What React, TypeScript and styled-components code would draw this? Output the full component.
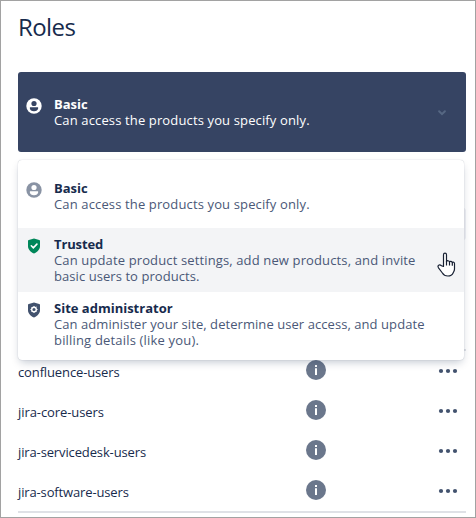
import React from 'react';
import styled, { createGlobalStyle } from 'styled-components';

const GlobalStyle = createGlobalStyle`
  * { box-sizing: border-box; }
  body { margin: 0; background: #fff; }
`;

const Page = styled.main`
  position: relative;
  width: 476px;
  height: 518px;
  padding: 0 9px 0 17px;
  border: 1px solid #a2a2a2;
  background: #fff;
  color: #172b4d;
  font: 13px/16px 'Open Sans', 'Noto Sans', sans-serif;
  overflow: hidden;
`;

const Heading = styled.h1`
  height: 71px;
  margin: 0;
  padding-top: 12px;
  font-size: 24px;
  font-weight: 400;
  line-height: 28px;
  letter-spacing: -0.6px;
`;

const Trigger = styled.div`
  display: flex;
  align-items: flex-start;
  height: 80px;
  padding: 24px 16px 0 8px;
  border-radius: 3px;
  background: #364463;
  color: #fff;
`;

const Field = styled.div`
  height: 32px;
  margin-top: 56px;
  border-radius: 3px;
  background: #f0f1f5;
`;

const Groups = styled.div`
  height: 164px;
  margin-top: 109px;
  border-top: 2px solid #dfe1e6;
  border-bottom: 2px solid #dfe1e6;
`;

const GroupRow = styled.div`
  display: grid;
  grid-template-columns: 288px 132px 1fr;
  align-items: center;
  height: 40px;
`;

const GroupName = styled.span<{ $spacing: number }>`
  padding-top: 1px;
  letter-spacing: ${p => p.$spacing}px;
  white-space: nowrap;
`;

const Menu = styled.div`
  position: absolute;
  top: 159px;
  left: 17px;
  width: 446px;
  height: 200px;
  padding: 4px 0;
  border-radius: 4px;
  background: #fff;
  box-shadow: 0 0 1px rgba(9, 30, 66, 0.31), 0 4px 8px -2px rgba(9, 30, 66, 0.25);
`;

const Option = styled.div<{ $active?: boolean; $tall?: boolean }>`
  display: flex;
  align-items: flex-start;
  height: 64px;
  padding: ${p => (p.$tall ? 16 : 8)}px 8px 0;
  background: ${p => (p.$active ? '#f3f4f6' : 'transparent')};
`;

const IconSlot = styled.span`
  flex: none;
  width: 28px;
  height: 20px;
  padding-top: 2px;
  svg { display: block; }
`;

const Copy = styled.div`
  flex: 1;
`;

const Title = styled.div<{ $spacing?: number }>`
  font-weight: 700;
  letter-spacing: ${p => p.$spacing ?? 0}px;
`;

const Line = styled.div<{ $spacing: number; $muted?: boolean }>`
  color: ${p => (p.$muted ? '#4a5877' : 'inherit')};
  letter-spacing: ${p => p.$spacing}px;
  white-space: nowrap;
`;

const ChevronIcon = styled.svg`
  margin-top: 12px;
`;

const InfoIcon = styled.svg`
  margin-bottom: 2px;
`;

const Pointer = styled.svg`
  position: absolute;
  top: 92px;
  left: 418px;
`;

const Person = ({ color, hole }: { color: string; hole: string }) => (
  <svg width="16" height="16" viewBox="0 0 16 16">
    <circle cx="8" cy="8" r="7.7" fill={color} />
    <circle cx="8" cy="5.5" r="2.6" fill={hole} />
    <path d="M3.9 9.3h8.2v1.3c0 1.7-1.8 2.6-4.1 2.6s-4.1-.9-4.1-2.6z" fill={hole} />
  </svg>
);

const Shield = ({ color, children }: { color: string; children: React.ReactNode }) => (
  <svg width="16" height="16" viewBox="0 0 16 16">
    <path d="M8 .4 13.2 2Q14 2.2 14 3v5.2c0 3.2-2.7 5.7-6 7.4-3.3-1.7-6-4.2-6-7.4V3q0-.8.8-1z" fill={color} />
    {children}
  </svg>
);

const Info = () => (
  <InfoIcon width="20" height="20" viewBox="0 0 20 20">
    <circle cx="10" cy="10" r="10" fill="#6b778c" />
    <path d="M9 5h2v2H9zM9 8.3h2V15H9z" fill="#fff" />
  </InfoIcon>
);

const More = () => (
  <svg width="20" height="6" viewBox="0 0 20 6">
    <circle cx="3" cy="3" r="2.1" fill="#42526e" />
    <circle cx="10" cy="3" r="2.1" fill="#42526e" />
    <circle cx="17" cy="3" r="2.1" fill="#42526e" />
  </svg>
);

const groups = [
  { name: 'confluence-users', spacing: -0.13 },
  { name: 'jira-core-users', spacing: -0.08 },
  { name: 'jira-servicedesk-users', spacing: -0.13 },
  { name: 'jira-software-users', spacing: -0.14 },
];

export default function App() {
  return (
    <>
      <GlobalStyle />
      <Page>
        <Heading>Roles</Heading>
        <Trigger>
          <IconSlot><Person color="#fff" hole="#364463" /></IconSlot>
          <Copy>
            <Title>Basic</Title>
            <Line $spacing={0.136}>Can access the products you specify only.</Line>
          </Copy>
          <ChevronIcon width="16" height="10" viewBox="0 0 16 10">
            <path d="m5.1 3.2 2.9 2.9 2.9-2.9" fill="none" stroke="#566783" strokeWidth="2" strokeLinecap="round" />
          </ChevronIcon>
        </Trigger>
        <Field />
        <Groups>
          {groups.map(g => (
            <GroupRow key={g.name}>
              <GroupName $spacing={g.spacing}>{g.name}</GroupName>
              <Info />
              <More />
            </GroupRow>
          ))}
        </Groups>
        <Menu>
          <Option $tall>
            <IconSlot><Person color="#8993a4" hole="#fff" /></IconSlot>
            <Copy>
              <Title>Basic</Title>
              <Line $muted $spacing={0.136}>Can access the products you specify only.</Line>
            </Copy>
          </Option>
          <Option $active>
            <IconSlot>
              <Shield color="#00875a">
                <path d="m5.3 7.8 2 2 3.6-3.7" fill="none" stroke="#fff" strokeWidth="1.6" strokeLinecap="round" />
              </Shield>
            </IconSlot>
            <Copy>
              <Title $spacing={-0.14}>Trusted</Title>
              <Line $muted $spacing={0.132}>Can update product settings, add new products, and invite</Line>
              <Line $muted $spacing={0.066}>basic users to products.</Line>
            </Copy>
          </Option>
          <Option>
            <IconSlot>
              <Shield color="#42526e">
                <circle cx="8" cy="7.5" r="2.3" fill="none" stroke="#fff" strokeWidth="1.4" />
                <path d="M8 4v1M8 10v1M4.5 7.5h1M10.5 7.5h1M5.5 5l.8.8M9.7 9.2l.8.8M10.5 5l-.8.8M6.3 9.2l-.8.8" stroke="#fff" strokeWidth="1" />
              </Shield>
            </IconSlot>
            <Copy>
              <Title>Site administrator</Title>
              <Line $muted $spacing={0.063}>Can administer your site, determine user access, and update</Line>
              <Line $muted $spacing={0.178}>billing details (like you).</Line>
            </Copy>
          </Option>
          <Pointer width="20" height="26" viewBox="0 0 20 26">
            <path d="M7.5 14.5V2.7C7.5.5 10.5.5 10.5 2.7v6.8c.4-1.2 2.7-1 3 .5.5-1 2.5-.8 2.8.6.8-.8 2.2-.3 2.2 1.1v5.2c0 2-.8 2.7-1.4 4-1 2.2-2.9 3.1-5.2 3.1-2.7 0-4.4-1-5.5-3l-3.9-5.2c-1.5-2.6.9-3.8 3-2.1z" fill="#fff" stroke="#172033" strokeWidth="1.2" strokeLinejoin="round" />
            <path d="M10.5 9v4.5M13.5 10v3.5M16.3 10.6v3.2" fill="none" stroke="#172033" strokeWidth="1.2" />
          </Pointer>
        </Menu>
      </Page>
    </>
  );
}
